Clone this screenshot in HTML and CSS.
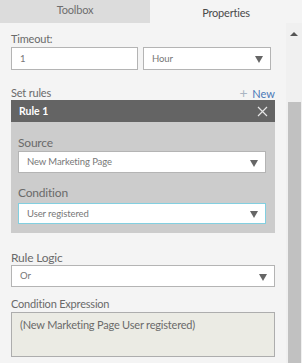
FILE: index.html
```html
<!DOCTYPE html>
<html>
<head>
<meta charset="utf-8">
<link rel="stylesheet" href="styles.css">
</head>
<body>
<div class="tabs">
  <div class="tab tab-inactive">Toolbox</div>
  <div class="tab tab-active">Properties</div>
</div>
<div class="panel">
  <div class="main">
    <div class="label lbl-timeout">Timeout:</div>
    <div class="row">
      <div class="input input-num">1</div>
      <div class="select select-unit"><span>Hour</span><i class="arrow"></i></div>
    </div>
    <div class="rules-head">
      <span class="label">Set rules</span>
      <span class="new"><span class="plus">+</span> New</span>
    </div>
    <div class="rule">
      <div class="rule-title">
        <span>Rule 1</span>
        <svg class="close" width="11" height="11" viewBox="0 0 11 11"><path d="M1 1L10 10M10 1L1 10" stroke="#e6e6e6" stroke-width="1.2" fill="none"/></svg>
      </div>
      <div class="rule-body">
        <div class="label lbl-source">Source</div>
        <div class="select select-full"><span>New Marketing Page</span><i class="arrow"></i></div>
        <div class="label lbl-cond">Condition</div>
        <div class="select select-full select-focus"><span>User registered</span><i class="arrow"></i></div>
      </div>
    </div>
    <div class="label lbl-logic">Rule Logic</div>
    <div class="select select-wide"><span>Or</span><i class="arrow"></i></div>
    <div class="label lbl-expr">Condition Expression</div>
    <div class="expr">(New Marketing Page User registered)</div>
  </div>
  <div class="scrollbar">
    <div class="sb-up"></div>
    <div class="sb-thumb"></div>
  </div>
</div>
</body>
</html>
```

FILE: styles.css
```css
html, body {
  margin: 0;
  padding: 0;
  background: #f4f4f4;
  font-family: Lato, "Noto Sans", sans-serif;
  color: #6a6a6a;
  font-size: 11px;
  overflow: hidden;
}
.tabs {
  display: flex;
  height: 23px;
}
.tab {
  text-align: center;
  font-size: 11px;
  letter-spacing: -0.2px;
}
.tab-inactive {
  width: 150px;
  background: #dcdcdc;
  color: #6e6e6e;
  line-height: 19px;
}
.tab-active {
  flex: 1;
  background: #f4f4f4;
  color: #4a4a4a;
  line-height: 25px;
}
.panel {
  display: flex;
  height: 340px;
}
.main {
  width: 264px;
  padding: 0 11px;
}
.label {
  font-size: 11px;
  letter-spacing: -0.2px;
  color: #6a6a6a;
  line-height: 15px;
}
.lbl-timeout { margin-top: 8px; height: 16px; }
.row {
  display: flex;
  gap: 5px;
}
.input, .select {
  box-sizing: border-box;
  background: #fff;
  border: 1px solid #b4b4b4;
  height: 23px;
  line-height: 21px;
  font-size: 9.5px;
  letter-spacing: -0.1px;
  color: #777;
  padding-left: 8px;
  position: relative;
}
.input-num { width: 127px; }
.select-unit { width: 128px; }
.arrow {
  position: absolute;
  right: 7px;
  top: 8px;
  width: 0;
  height: 0;
  border-left: 4px solid transparent;
  border-right: 4px solid transparent;
  border-top: 7px solid #666;
}
.rules-head {
  display: flex;
  justify-content: space-between;
  align-items: flex-end;
  margin-top: 10px;
  height: 20px;
}
.new {
  color: #4a79b8;
  font-size: 11px;
  line-height: 15px;
  margin-bottom: -1px;
}
.plus {
  color: #a9b4c2;
  font-size: 14px;
  margin-right: 2px;
}
.rule-title {
  height: 22px;
  background: #646464;
  color: #fff;
  font-weight: 700;
  font-size: 10.5px;
  line-height: 22px;
  padding: 0 8px;
  display: flex;
  justify-content: space-between;
  align-items: center;
}
.close { margin-right: -1px; }
.rule-body {
  background: #cccccc;
  height: 111px;
  padding: 0 9px 0 7px;
  overflow: hidden;
}
.lbl-source { margin-top: 13px; height: 16px; font-size: 12px; }
.select-full { height: 22px; line-height: 20px; }
.lbl-cond { margin-top: 12px; height: 18px; font-size: 12px; }
.select-focus { border-color: #82cfe0; height: 21px; line-height: 19px; }
.select-focus .arrow { top: 7px; }
.lbl-logic { margin-top: 17px; height: 15px; font-size: 12px; }
.select-wide { height: 22px; line-height: 20px; }
.lbl-expr { margin-top: 9px; height: 16px; }
.expr {
  box-sizing: border-box;
  height: 45px;
  background: #ebebe4;
  border: 1px solid #adadad;
  padding: 4px 8px;
  font-size: 11px;
  letter-spacing: -0.2px;
  color: #6a6a6a;
  line-height: 16px;
}
.scrollbar {
  width: 16px;
  background: #f0f0f0;
  position: relative;
}
.sb-up {
  position: absolute;
  left: 4px;
  top: 9px;
  width: 0;
  height: 0;
  border-left: 4px solid transparent;
  border-right: 4px solid transparent;
  border-bottom: 4px solid #555;
}
.sb-thumb {
  position: absolute;
  left: 2px;
  right: 1px;
  top: 79px;
  bottom: 0;
  background: #c1c1c1;
}
```
